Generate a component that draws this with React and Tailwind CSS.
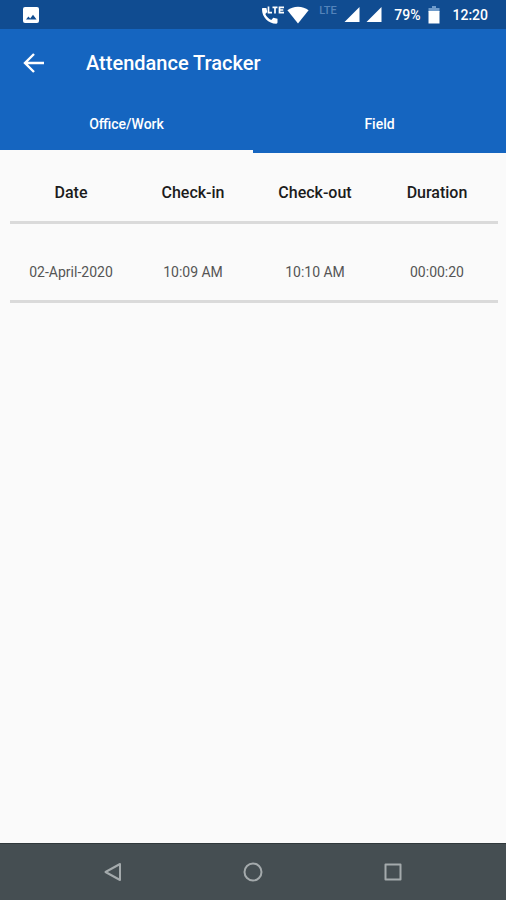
const columns = ['Date', 'Check-in', 'Check-out', 'Duration'];

const records = [
  { date: '02-April-2020', checkIn: '10:09 AM', checkOut: '10:10 AM', duration: '00:00:20' },
];

function SignalIcon() {
  return (
    <svg className="h-4 w-4" viewBox="0 0 16 16" fill="currentColor" aria-hidden="true">
      <path d="M15.500 0v15H.5z" />
    </svg>
  );
}

function StatusBar() {
  return (
    <div className="flex h-[29px] items-center justify-between bg-[#104c91] pl-[22px] pr-[18px] pt-px text-sm font-medium text-white">
      <svg className="h-[18px] w-[18px]" viewBox="0 0 18 18" aria-hidden="true">
        <rect x="1" y="1" width="16" height="16" rx="2" fill="#fff" />
        <path d="M4 13.5l2.4-3.1 1.8 2L11 8.8l3.6 4.7z" fill="#104c91" />
      </svg>
      <div className="flex items-center">
        <svg className="h-5 w-6" viewBox="0 0 24 20" aria-hidden="true">
          <path
            d="M2 3h3.400l.9 4-2 1.900c1.300 2.700 3.300 4.700 6 6l2-2.100 4.200 1v3.500c0 .9-.4 1.400-1.300 1.400C7.500 18.700 1 12.200 1 4.200 1 3.400 1.300 3 2 3z"
            fill="#fff"
          />
          <path
            d="M7.500 1.500v6.200h3.500M11.500 2.300h5M14 2.300v6.200M23 2.300h-4.500v5.400H23M18.500 5h3.800"
            fill="none"
            stroke="#fff"
            strokeWidth="1.700"
          />
        </svg>
        <svg className="ml-[2px] h-[18px] w-[22px]" viewBox="0 0 22 18" fill="currentColor" aria-hidden="true">
          <path d="M11 17.500L.4 4.300C3.400 2 7 .8 11 .8s7.600 1.200 10.600 3.500z" />
        </svg>
        <span className="ml-[10px] mb-2 w-5 text-[11px] leading-3 text-[#5484bb]">LTE</span>
        <span className="ml-[5px] flex gap-[6px]">
          <SignalIcon />
          <SignalIcon />
        </span>
        <span className="ml-3">79%</span>
        <svg className="ml-2 h-[18px] w-3" viewBox="0 0 12 18" aria-hidden="true">
          <path d="M4 0h4v2h3.500v4H.5V2H4z" fill="#6f9bcb" />
          <path d="M.5 5h11v12.500H.5z" fill="#fff" />
        </svg>
        <span className="ml-3">12:20</span>
      </div>
    </div>
  );
}

function AppHeader() {
  return (
    <header className="bg-[#1565c0] text-white">
      <div className="flex h-[67px] items-center gap-10 pl-[22px]">
        <button type="button" aria-label="Back" className="h-6 w-6">
          <svg viewBox="0 0 24 24" fill="none" stroke="currentColor" strokeWidth="2.400" aria-hidden="true">
            <path d="M22 12H3.500M12 3l-9 9 9 9" />
          </svg>
        </button>
        <h1 className="text-xl font-medium">Attendance Tracker</h1>
      </div>
      <div role="tablist" className="grid h-[57px] grid-cols-2 text-sm font-medium">
        <button type="button" role="tab" aria-selected="true" className="border-b-[3px] border-[#fafafa] pt-[2px]">
          Office/Work
        </button>
        <button type="button" role="tab" aria-selected="false" className="border-b-[3px] border-transparent pt-[2px]">
          Field
        </button>
      </div>
    </header>
  );
}

function AttendanceTable() {
  return (
    <table className="w-full table-fixed text-center">
      <thead>
        <tr className="h-[69px] border-b-[3px] border-[#dadada] text-base text-[#1c1c1c]">
          {columns.map((column) => (
            <th key={column} scope="col" className="pt-3 font-medium">
              {column}
            </th>
          ))}
        </tr>
      </thead>
      <tbody>
        {records.map((record) => (
          <tr key={record.date} className="h-[79px] border-b-[3px] border-[#dadada] text-sm text-[#555]">
            <td className="pt-5">{record.date}</td>
            <td className="pt-5">{record.checkIn}</td>
            <td className="pt-5">{record.checkOut}</td>
            <td className="pt-5">{record.duration}</td>
          </tr>
        ))}
      </tbody>
    </table>
  );
}

function NavigationBar() {
  return (
    <nav className="flex h-[57px] items-center justify-center gap-[120px] border-t border-[#30383b] bg-[#454e52] text-[#a4aaac]">
      <button type="button" aria-label="Back" className="h-5 w-5">
        <svg viewBox="0 0 20 20" fill="none" stroke="currentColor" strokeWidth="2" strokeLinejoin="round" aria-hidden="true">
          <path d="M17 2v16L2.500 10z" />
        </svg>
      </button>
      <button type="button" aria-label="Home" className="h-5 w-5">
        <svg viewBox="0 0 20 20" fill="none" stroke="currentColor" strokeWidth="2" aria-hidden="true">
          <circle cx="10" cy="10" r="8.500" />
        </svg>
      </button>
      <button type="button" aria-label="Recent apps" className="h-5 w-5">
        <svg viewBox="0 0 20 20" fill="none" stroke="currentColor" strokeWidth="2" strokeLinejoin="round" aria-hidden="true">
          <rect x="2.500" y="2.500" width="15" height="15" />
        </svg>
      </button>
    </nav>
  );
}

export default function App() {
  return (
    <div className="flex min-h-screen flex-col bg-[#fafafa] font-[Roboto,sans-serif]">
      <StatusBar />
      <AppHeader />
      <main className="flex-1 pl-[10px] pr-2">
        <AttendanceTable />
      </main>
      <NavigationBar />
    </div>
  );
}
